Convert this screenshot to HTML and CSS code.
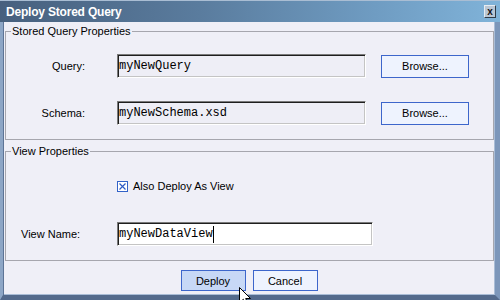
FILE: index.html
```html
<!DOCTYPE html>
<html lang="en">
<head>
    <meta charset="UTF-8">
    <title>Deploy Stored Query</title>
    <link rel="stylesheet" href="styles.css">
</head>
<body>
    <div class="window">
        <div class="titlebar">
            <span class="title">Deploy Stored Query</span>
            <span class="close">x</span>
        </div>

        <div class="content">
            <fieldset class="group props">
                <legend>Stored Query Properties</legend>
                <div class="row">
                    <label class="label">Query:</label>
                    <div class="field disabled">myNewQuery</div>
                    <button class="btn browse">Browse...</button>
                </div>
                <div class="row second">
                    <label class="label">Schema:</label>
                    <div class="field disabled">myNewSchema.xsd</div>
                    <button class="btn browse">Browse...</button>
                </div>
            </fieldset>

            <fieldset class="group view">
                <legend>View Properties</legend>
                <div class="row check-row">
                    <span class="label"></span>
                    <label class="check">
                        <span class="box">
                            <svg width="9" height="9" viewBox="0 0 9 9">
                                <path d="M1.5 1.5 L7.5 7.5 M7.5 1.5 L1.5 7.5" stroke="#2d5bc4" stroke-width="1.2" fill="none"/>
                            </svg>
                        </span>
                        Also Deploy As View
                    </label>
                </div>
                <div class="row name-row">
                    <label class="label left">View Name:</label>
                    <div class="field wide">myNewDataView<span class="caret"></span></div>
                </div>
            </fieldset>

            <div class="buttons">
                <button class="btn action default">Deploy</button>
                <button class="btn action">Cancel</button>
            </div>
        </div>

        <!-- mouse pointer over the Deploy button -->
        <svg class="cursor" width="13" height="20" viewBox="0 0 13 20">
            <path d="M0.5 0.5 L0.5 16 L4.3 12.3 L7 18.5 L9.3 17.5 L6.7 11.5 L11.5 11.5 Z" fill="#fff" stroke="#000" stroke-width="1"/>
        </svg>
    </div>
</body>
</html>
```

FILE: styles.css
```css
body {
    margin: 0;
    padding: 0;
    font-family: "Liberation Sans", Arial, sans-serif;
    font-size: 11px;
    color: #000;
    background: #efeff7;
}

.window {
    position: relative;
    width: 500px;
    height: 300px;
    display: flex;
    flex-direction: column;
    overflow: hidden;
}

.titlebar {
    height: 22px;
    flex: none;
    display: flex;
    align-items: center;
    box-sizing: border-box;
    border-top: 1px solid #a9bdd3;
    background: linear-gradient(90deg, #47607e 0%, #5a7c9e 40%, #6f9cc2 75%, #80b3d9 100%);
}

.title {
    margin-left: 6px;
    color: #fff;
    font-weight: bold;
    font-size: 12px;
    letter-spacing: -0.2px;
}

.close {
    margin-left: auto;
    margin-right: 4px;
    width: 12px;
    height: 13px;
    box-sizing: border-box;
    display: flex;
    align-items: center;
    justify-content: center;
    background: #b9c6d4;
    border: 1px solid;
    border-color: #e6ecf2 #2e3a48 #2e3a48 #e6ecf2;
    font-weight: bold;
    font-size: 10px;
    line-height: 10px;
    color: #111;
}

.content {
    flex: 1;
    display: flex;
    flex-direction: column;
    border-left: 3px solid #8da6c6;
    border-right: 5px solid #7c96ba;
    border-bottom: 5px solid #546a8c;
    box-shadow: inset 1px 0 0 #5d7496, inset -1px -1px 0 #a9bcd6;
    background: #efeff7;
    padding-top: 2px;
}

.group {
    margin: 0 1px 0 2px;
    padding: 16px 0 14px 0;
    border: 1px solid #a6a6ae;
    min-inline-size: 0;
}

.group legend {
    margin-left: 5px;
    padding: 0 1px;
    line-height: 14px;
    height: 14px;
}

.group.view {
    margin-top: 4px;
    padding-top: 21px;
}

.row {
    display: flex;
    align-items: center;
    height: 24px;
}

.row.second {
    margin-top: 23px;
}

.check-row {
    height: 14px;
}

.name-row {
    margin-top: 29px;
}

.label {
    width: 79px;
    margin-right: 32px;
    text-align: right;
    flex: none;
}

.label.left {
    text-align: left;
    box-sizing: border-box;
    padding-left: 15px;
}

.field {
    width: 249px;
    height: 24px;
    box-sizing: border-box;
    flex: none;
    display: flex;
    align-items: center;
    padding-left: 1px;
    background: #fff;
    border: 1px solid;
    border-color: #7a7a7a #ffffff #ffffff #7a7a7a;
    box-shadow: inset 1px 1px 0 #1e1e1e, inset -1px -1px 0 #c4c4c4;
    font-family: "Liberation Mono", "Courier New", monospace;
    font-size: 12px;
}

.field.disabled {
    background: #eeeef6;
}

.field.wide {
    width: 256px;
}

.caret {
    width: 0;
    height: 17px;
    border-left: 1px solid #000;
}

.btn {
    font-family: "Liberation Sans", Arial, sans-serif;
    font-size: 11px;
    color: #000;
    background: #eef3fe;
    border: 1px solid #3d66cb;
    padding: 0;
    box-sizing: border-box;
    cursor: pointer;
}

.browse {
    margin-left: 15px;
    width: 88px;
    height: 23px;
}

.check {
    display: flex;
    align-items: center;
}

.box {
    width: 11px;
    height: 11px;
    box-sizing: border-box;
    border: 1px solid #3262c8;
    background: #fff;
    display: flex;
    align-items: center;
    justify-content: center;
    margin-right: 5px;
}

.box svg {
    display: block;
}

.buttons {
    display: flex;
    justify-content: center;
    gap: 7px;
    margin-top: 9px;
}

.action {
    width: 65px;
    height: 21px;
}

.action.default {
    background: #c7d8f6;
}

.cursor {
    position: absolute;
    left: 239px;
    top: 287px;
}
```
